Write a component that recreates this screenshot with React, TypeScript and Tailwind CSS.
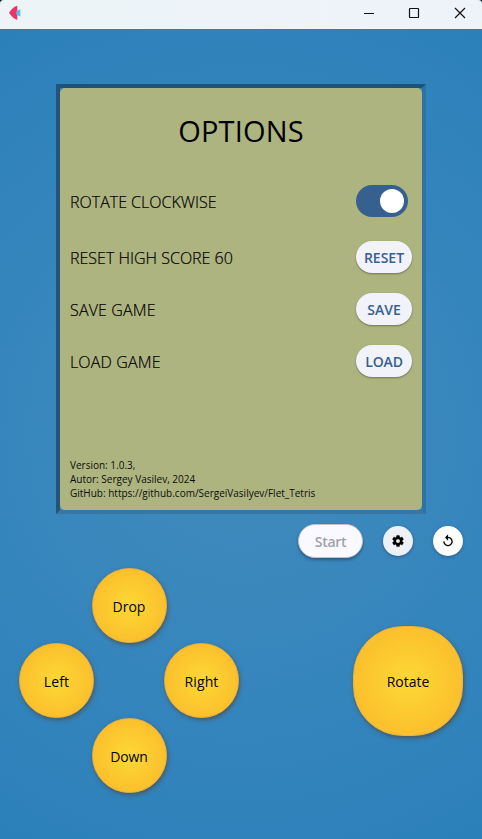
import React from "react";

const round =
  "flex items-center justify-center border border-[#efb137] bg-[radial-gradient(circle_closest-side,#fdd835_0%,#fbc02d_100%)] text-black text-[14px] font-normal shadow-[1px_2px_4px_0px_rgba(85,75,65,0.8)]";

function PadButton({ label, spacing }: { label: string; spacing: string }) {
  return (
    <button className={`${round} h-[75px] w-[75px] rounded-full pt-0.5`}>
      <span className={spacing}>{label}</span>
    </button>
  );
}

function Row({ label, spacing, children }: { label: string; spacing: string; children: React.ReactNode }) {
  return (
    <div className="flex h-8 items-center justify-between">
      <span className={`whitespace-nowrap pt-0.5 text-[16px] font-light leading-5 text-black [-webkit-text-stroke:0.2px_#000] ${spacing}`}>{label}</span>
      {children}
    </div>
  );
}

function Pill({ label, spacing }: { label: string; spacing: string }) {
  return (
    <button className="flex h-8 w-14 items-center justify-center rounded-full bg-[#f1f2fa] text-[14px] font-semibold text-[#36618e] shadow-[0_1px_2px_rgba(0,0,0,0.35)]">
      <span className={spacing}>{label}</span>
    </button>
  );
}

export default function App() {
  return (
    <div className="h-[839px] w-[482px] overflow-hidden bg-[#202020] font-['Open_Sans','Noto_Sans',sans-serif]">
      <div className="flex h-full flex-col overflow-hidden rounded-t-[4px] bg-[radial-gradient(circle_482px_at_241px_434px,#428bbb_0%,#3585bd_55%,#2b80b9_100%)]">
        <header className="flex h-[29px] shrink-0 items-center justify-between bg-[linear-gradient(90deg,#ecf4f7,#eef3fa)] pl-2 pr-[16px]">
          <svg width="14" height="16" viewBox="0 0 14 16" className="-mt-[3px]">
            <path d="M7 6.7 12.3 4.2v7.4L7 9.3Z" fill="#55bfe7" />
            <path d="M9.3.7v4.9L8.2 7v2l1.1 1.5v4.4C5.6 13.8 3.6 11.5 1 7.8 3.6 4 5.6 1.8 9.3.7Z" fill="#ee3167" />
          </svg>
          <svg width="103" height="12" viewBox="0 0 103 12" fill="none" stroke="#111" strokeWidth="1.2" className="-mt-[3px]">
            <path d="M1 6.5h10" strokeWidth="1" />
            <rect x="46.5" y="1.5" width="9" height="9" rx=".6" />
            <path d="m92 1 10 10m0-10L92 11" />
          </svg>
        </header>

        <main className="flex flex-col pt-[55px]">
          <section className="mx-14 h-[430px] border-4 border-b-[#3677a5] border-l-[#23557a] border-r-[#2d73a5] border-t-[#1f5278]">
            <div className="flex h-full flex-col rounded-[5px] bg-[#aeb480] px-2.5 pt-[23px]">
              <h1 className="text-center text-[29px] font-normal leading-10 tracking-[0.15px] text-black">OPTIONS</h1>
              <div className="mt-[34px] flex flex-col">
                <Row label="ROTATE CLOCKWISE" spacing="tracking-[0]">
                  <span className="mr-1 flex h-8 w-[52px] items-center justify-end rounded-full bg-[#36618e] pr-1">
                    <span className="h-6 w-6 rounded-full bg-white" />
                  </span>
                </Row>
                <div className="mt-6 flex flex-col gap-5">
                  <Row label="RESET HIGH SCORE 60" spacing="tracking-[0]">
                    <Pill label="RESET" spacing="tracking-[0]" />
                  </Row>
                  <Row label="SAVE GAME" spacing="tracking-[0.15px]">
                    <Pill label="SAVE" spacing="tracking-[0]" />
                  </Row>
                  <Row label="LOAD GAME" spacing="tracking-[0.15px]">
                    <Pill label="LOAD" spacing="tracking-[-0.1px]" />
                  </Row>
                </div>
              </div>
              <div className="mb-2.5 mt-auto whitespace-nowrap text-[10px] leading-[14px] text-[#0c0d08]">
                <p>Version: 1.0.3,</p>
                <p>Autor: Sergey Vasilev, 2024</p>
                <p>GitHub: https://github.com/SergeiVasilyev/Flet_Tetris</p>
              </div>
            </div>
          </section>

          <div className="mt-2.5 flex items-center justify-end gap-5 pr-[19px]">
            <button className="flex h-[34px] w-[65px] items-center justify-center rounded-full border border-[#bfc0cc] bg-[#f9f9ff] pt-px text-[14px] font-semibold text-[#a0a2a8] shadow-[0_2px_3px_rgba(20,40,70,0.45)]">
              <span className="tracking-[-0.3px]">Start</span>
            </button>
            <button aria-label="Settings" className="flex h-[30px] w-[30px] items-center justify-center rounded-full bg-[#edf1f5] shadow-[0_1px_3px_rgba(20,40,70,0.45)]">
              <svg width="14" height="14" viewBox="0 0 24 24" fill="#000" stroke="#000" strokeWidth=".7">
                <path d="M19.14 12.94c.04-.3.06-.61.06-.94 0-.32-.02-.64-.07-.94l2.03-1.58c.18-.14.23-.41.12-.61l-1.92-3.32c-.12-.22-.37-.29-.59-.22l-2.39.96c-.5-.38-1.03-.7-1.62-.94l-.36-2.54c-.04-.24-.24-.41-.48-.41h-3.84c-.24 0-.43.17-.47.41l-.36 2.54c-.59.24-1.13.57-1.62.94l-2.39-.96c-.22-.08-.47 0-.59.22L2.74 8.87c-.12.21-.08.47.12.61l2.03 1.58c-.05.3-.09.63-.09.94s.02.64.07.94l-2.03 1.58c-.18.14-.23.41-.12.61l1.92 3.32c.12.22.37.29.59.22l2.39-.96c.5.38 1.03.7 1.62.94l.36 2.54c.05.24.24.41.48.41h3.84c.24 0 .44-.17.47-.41l.36-2.54c.59-.24 1.13-.56 1.62-.94l2.39.96c.22.08.47 0 .59-.22l1.92-3.32c.12-.22.07-.47-.12-.61l-2.01-1.58zM12 15.6c-1.98 0-3.6-1.62-3.6-3.6s1.62-3.6 3.6-3.6 3.6 1.62 3.6 3.6-1.62 3.6-3.6 3.6z" />
              </svg>
            </button>
            <button aria-label="Restart" className="flex h-[30px] w-[30px] items-center justify-center rounded-full bg-white shadow-[0_1px_3px_rgba(20,40,70,0.45)]">
              <svg width="14" height="14" viewBox="0 0 24 24" fill="#000" stroke="#000" strokeWidth=".3">
                <path d="M12 5V1L7 6l5 5V7c3.31 0 6 2.69 6 6s-2.69 6-6 6-6-2.69-6-6H4c0 4.42 3.58 8 8 8s8-3.58 8-8-3.58-8-8-8z" />
              </svg>
            </button>
          </div>

          <div className="mt-2.5 flex items-center justify-between pl-[19px] pr-[19px]">
            <div className="flex w-[220px] flex-col items-center">
              <PadButton label="Drop" spacing="tracking-[0]" />
              <div className="flex w-full justify-between">
                <PadButton label="Left" spacing="tracking-[0.1px]" />
                <PadButton label="Right" spacing="tracking-[0.1px]" />
              </div>
              <PadButton label="Down" spacing="tracking-[-0.1px]" />
            </div>
            <button className={`${round} h-[110px] w-[110px] rounded-[50px] pt-0.5`}>
              <span className="tracking-[0]">Rotate</span>
            </button>
          </div>
        </main>
      </div>
    </div>
  );
}
